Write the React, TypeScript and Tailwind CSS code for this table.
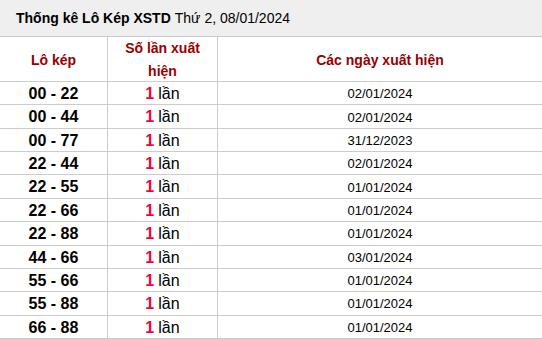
const rows: [string, string][] = [
  ['00 - 22', '02/01/2024'],
  ['00 - 44', '02/01/2024'],
  ['00 - 77', '31/12/2023'],
  ['22 - 44', '02/01/2024'],
  ['22 - 55', '01/01/2024'],
  ['22 - 66', '01/01/2024'],
  ['22 - 88', '01/01/2024'],
  ['44 - 66', '03/01/2024'],
  ['55 - 66', '01/01/2024'],
  ['55 - 88', '01/01/2024'],
  ['66 - 88', '01/01/2024'],
]

export default function App() {
  return (
    <div className="w-[542px] h-[339px] overflow-hidden bg-white font-['Liberation_Sans',Arial,sans-serif] text-black">
      {/* tiêu đề */}
      <div className="h-[37px] bg-[#efefef] border-b border-[#cccccc] flex items-center pl-4 text-[14px]">
        <span className="font-bold">Thống kê Lô Kép XSTD</span>
        <span className="ml-1">Thứ 2, 08/01/2024</span>
      </div>

      {/* hàng tiêu đề bảng */}
      <div className="grid grid-cols-[108px_110px_1fr] h-[45px] border-b border-[#cccccc] text-[#990000] font-bold text-[14px]">
        <div className="border-r border-[#cccccc] flex items-center justify-center">Lô kép</div>
        <div className="border-r border-[#cccccc] flex flex-col items-center justify-center leading-[23px] text-center">
          <span>Số lần xuất</span>
          <span>hiện</span>
        </div>
        <div className="flex items-center justify-center">Các ngày xuất hiện</div>
      </div>

      {rows.map(([pair, date]) => (
        <div
          key={pair}
          className="grid grid-cols-[108px_110px_1fr] h-[23.36px] border-b border-[#cccccc]"
        >
          <div className="border-r border-[#cccccc] flex items-center justify-center font-bold text-[16px]">
            {pair}
          </div>
          <div className="border-r border-[#cccccc] flex items-center justify-center text-[16px]">
            <span className="font-bold text-[#f5003d]">1</span>
            <span className="ml-1">lần</span>
          </div>
          <div className="flex items-center justify-center text-[13px]">{date}</div>
        </div>
      ))}
    </div>
  )
}
